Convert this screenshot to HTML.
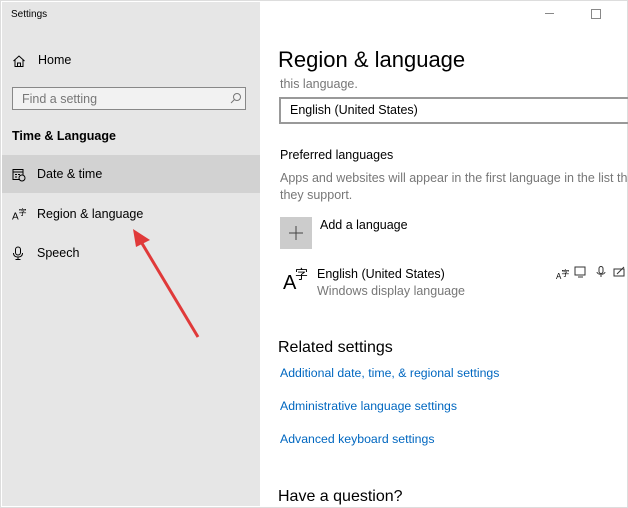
<!DOCTYPE html><html><head><style>
body{margin:0;width:628px;height:508px;position:relative;background:#fff;font-family:"Liberation Sans",sans-serif;overflow:hidden}
.a{position:absolute;white-space:nowrap}
.side{position:absolute;left:2px;top:2px;width:258px;height:504px;background:#e6e6e6}
.s{font-size:12.5px;color:#000}
.g{color:#777;font-size:12.5px}
.l{color:#0067c0;font-size:12.3px}
</style></head><body>
<div style="position:absolute;left:0;top:0;width:628px;height:508px;border:1px solid #ddd;box-sizing:border-box"></div>
<div class="side"></div>
<div class="a" style="left:11px;top:9px;font-size:10px">Settings</div>
<svg class="a" style="left:12px;top:54px" width="14" height="14" viewBox="0 0 14 14"><path d="M1.5 7 L7 2 L12.5 7 M3 6 V12.5 H11 V6 M5.5 12.5 V9 H8.5 V12.5" fill="none" stroke="#000" stroke-width="1"/></svg>
<div class="a s" style="left:38px;top:53px">Home</div>
<div class="a" style="left:12px;top:87px;width:234px;height:23px;border:1px solid #888;background:#f2f2f2;box-sizing:border-box"></div>
<div class="a g" style="left:22px;top:92px">Find a setting</div>
<svg class="a" style="left:229px;top:92px" width="13" height="13"><circle cx="8" cy="5" r="3.5" fill="none" stroke="#777"/><path d="M5.5 7.5 L2 11" stroke="#777"/></svg>
<div class="a" style="left:12px;top:129px;font-size:12.5px;font-weight:bold">Time &amp; Language</div>
<div class="a" style="left:2px;top:155px;width:258px;height:38px;background:#d2d2d2"></div>
<svg class="a" style="left:12px;top:168px" width="14" height="14"><rect x="1" y="1.5" width="10" height="10" fill="none" stroke="#000"/><path d="M1 4H11M3 6.5h2M6 6.5h2M3 9h2" stroke="#000"/><circle cx="10" cy="10" r="3" fill="#d2d2d2" stroke="#000"/></svg>
<div class="a s" style="left:37px;top:167px">Date &amp; time</div>
<div class="a" style="left:12px;top:207px;font-size:10px">A<sup style="font-size:8px;font-family:'Noto Sans CJK SC'">字</sup></div>
<div class="a s" style="left:37px;top:207px">Region &amp; language</div>
<svg class="a" style="left:12px;top:246px" width="12" height="14"><rect x="3.5" y="1" width="5" height="8" rx="2.5" fill="none" stroke="#000"/><path d="M1.5 7c0 3 2 4 4.5 4s4.5-1 4.5-4M6 11v2.5M3.5 13.5h5" fill="none" stroke="#000"/></svg>
<div class="a s" style="left:37px;top:246px">Speech</div>
<svg class="a" style="left:0;top:0" width="628" height="508"><path d="M198 337 L140 240" stroke="#e03a3a" stroke-width="3"/><path d="M133 229 L150 240 L136 247Z" fill="#e03a3a"/></svg>
<div class="a" style="left:545px;top:13px;width:9px;border-top:1px solid #888"></div>
<div class="a" style="left:591px;top:9px;width:8px;height:8px;border:1px solid #888"></div>
<div class="a" style="left:278px;top:47px;font-size:22px">Region &amp; language</div>
<div class="a g" style="left:280px;top:77px">this language.</div>
<div class="a" style="left:279px;top:97px;width:360px;height:27px;border:2px solid #999;box-sizing:border-box"></div>
<div class="a s" style="left:290px;top:103px">English (United States)</div>
<div class="a s" style="left:280px;top:148px">Preferred languages</div>
<div class="a g" style="left:280px;top:171px;width:348px;overflow:hidden">Apps and websites will appear in the first language in the list tha</div>
<div class="a g" style="left:280px;top:188px">they support.</div>
<div class="a" style="left:280px;top:217px;width:32px;height:32px;background:#ccc"></div>
<svg class="a" style="left:289px;top:226px" width="14" height="14"><path d="M7 0V14M0 7H14" stroke="#444" stroke-width="1"/></svg>
<div class="a s" style="left:320px;top:218px">Add a language</div>
<div class="a" style="left:283px;top:272px;font-size:20px">A</div>
<div class="a" style="left:295px;top:264px;font-size:13px;font-family:'Noto Sans CJK SC',sans-serif">字</div>
<div class="a s" style="left:317px;top:267px">English (United States)</div>
<div class="a g" style="left:317px;top:284px">Windows display language</div>
<div class="a" style="left:556px;top:268px;font-size:8px">A<span style="font-family:'Noto Sans CJK SC';font-size:8px;vertical-align:3px">字</span></div>
<svg class="a" style="left:574px;top:266px" width="54" height="12"><rect x="1" y="1" width="10" height="8" fill="none" stroke="#333"/><path d="M4 11h5" stroke="#333"/><rect x="25" y="0.5" width="4" height="7" rx="2" fill="none" stroke="#333"/><path d="M23 6c0 3 8 3 8 0M27 9v2" fill="none" stroke="#333"/><rect x="40" y="3" width="10" height="7" fill="none" stroke="#333"/><path d="M43 8l7-7" stroke="#333"/></svg>
<div class="a" style="left:278px;top:339px;font-size:16px">Related settings</div>
<div class="a l" style="left:280px;top:366px">Additional date, time, &amp; regional settings</div>
<div class="a l" style="left:280px;top:399px">Administrative language settings</div>
<div class="a l" style="left:280px;top:432px">Advanced keyboard settings</div>
<div class="a" style="left:278px;top:488px;font-size:16px">Have a question?</div>
</body></html>
